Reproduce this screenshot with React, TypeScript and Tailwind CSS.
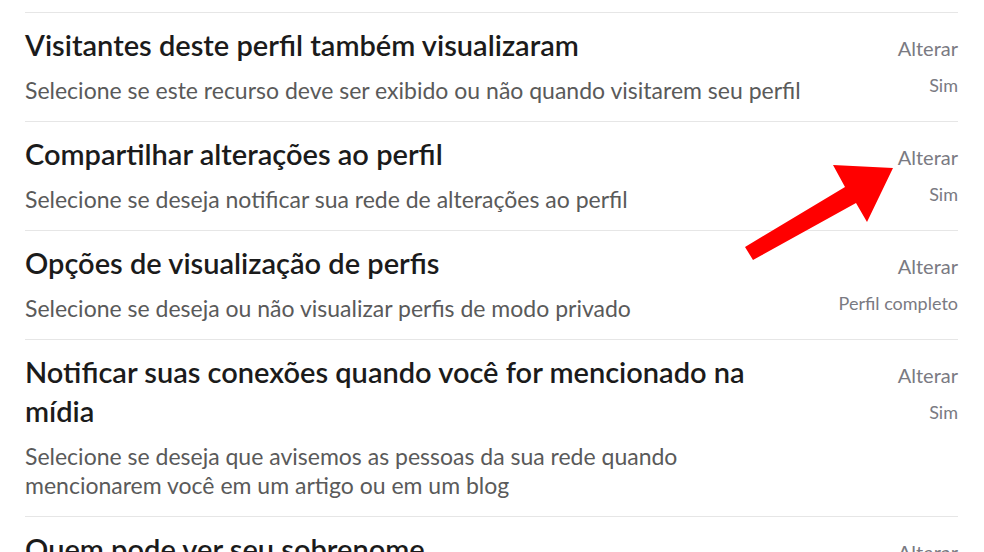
type Setting = {
  title: React.ReactNode;
  description: React.ReactNode;
  value: string;
};

const settings: Setting[] = [
  {
    title: 'Visitantes deste perfil também visualizaram',
    description: 'Selecione se este recurso deve ser exibido ou não quando visitarem seu perfil',
    value: 'Sim',
  },
  {
    title: 'Compartilhar alterações ao perfil',
    description: 'Selecione se deseja notificar sua rede de alterações ao perfil',
    value: 'Sim',
  },
  {
    title: 'Opções de visualização de perfis',
    description: 'Selecione se deseja ou não visualizar perfis de modo privado',
    value: 'Perfil completo',
  },
  {
    title: (
      <>
        Notificar suas conexões quando você for mencionado na
        <br />
        mídia
      </>
    ),
    description: (
      <>
        Selecione se deseja que avisemos as pessoas da sua rede quando
        <br />
        mencionarem você em um artigo ou em um blog
      </>
    ),
    value: 'Sim',
  },
  {
    title: 'Quem pode ver seu sobrenome',
    description: 'Selecione como seu sobrenome aparece para quem não é conexão',
    value: 'Nome completo',
  },
];

function SettingRow({ setting }: { setting: Setting }) {
  return (
    <li className="flex border-t border-[#e6e6e6] pt-[12px] pb-4">
      <div className="flex-1">
        <h3 className="text-[29px] leading-[39px] font-semibold text-[#1b1b1b]">{setting.title}</h3>
        <p className="mt-[12px] text-[23px] leading-[29px] text-[#5a5a5a]">{setting.description}</p>
      </div>
      <div className="flex w-[140px] flex-col items-end pt-[11px]">
        <button className="text-[20px] leading-6 text-[#7a7a82]">Alterar</button>
        <span className="mt-[15px] text-[18px] leading-5 text-[#7a7a82]">{setting.value}</span>
      </div>
    </li>
  );
}

function Arrow() {
  return (
    <svg className="pointer-events-none absolute left-0 top-0" width="984" height="552" viewBox="0 0 984 552">
      <polygon
        points="745,247 845,187 833,165 893,168 867,222 856,203 753,260"
        fill="#ff0000"
      />
    </svg>
  );
}

export default function App() {
  return (
    <div
      className="relative h-[552px] w-[984px] overflow-hidden bg-white"
      style={{ fontFamily: 'Lato, "Open Sans", sans-serif' }}
    >
      <ul className="ml-[25px] mt-[12px] w-[933px]">
        {settings.map((s, i) => (
          <SettingRow key={i} setting={s} />
        ))}
      </ul>
      <Arrow />
    </div>
  );
}
